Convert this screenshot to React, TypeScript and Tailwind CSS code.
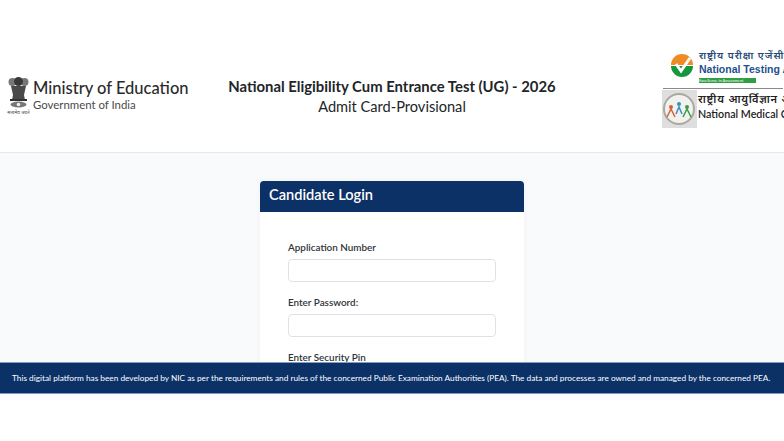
export default function App() {
  const font = { fontFamily: 'Lato,"Noto Sans",sans-serif' };
  return (
    <div className="relative h-[441px] w-[784px] overflow-hidden bg-white" style={font}>
      <header className="flex h-[153px] items-start border-b border-[#e6e9ec] bg-white">
        <div className="mt-[77px] ml-[7px] flex w-[215px] shrink-0 items-start gap-[3px]">
          <svg width="23" height="39" viewBox="0 0 23 39" className="shrink-0">
            <circle cx="5.5" cy="5" r="4" fill="#777" />
            <circle cx="17.5" cy="5" r="4" fill="#777" />
            <circle cx="11.5" cy="4.5" r="4.5" fill="#3a3a3a" />
            <path d="M4 9h15l-2 9 1 5H5l1-5z" fill="#4a4a4a" />
            <rect x="3" y="22" width="17" height="2" fill="#333" />
            <ellipse cx="11.5" cy="27.5" rx="8" ry="3" fill="#777" />
            <circle cx="11.5" cy="27.5" r="1.8" fill="#eee" />
            <text x="11.5" y="37" textAnchor="middle" fontSize="4.6" fill="#444" fontFamily="'Noto Sans Devanagari','Noto Sans',serif">सत्यमेव जयते</text>
          </svg>
          <div className="flex flex-col pt-[2px]">
            <span className="text-[16.5px] leading-[19px] font-medium whitespace-nowrap text-[#2b2b2b]">Ministry of Education</span>
            <span className="text-[11.4px] leading-[13px] whitespace-nowrap text-[#4a4a4a]">Government of India</span>
          </div>
        </div>
        <div className="mt-[76px] flex w-[340px] shrink-0 flex-col items-center">
          <h1 className="text-[14.85px] leading-[21px] font-bold whitespace-nowrap text-[#212529]">National Eligibility Cum Entrance Test (UG) - 2026</h1>
          <h2 className="text-[14.6px] leading-[19px] font-normal whitespace-nowrap text-[#212529]">Admit Card-Provisional</h2>
        </div>
        <div className="ml-[100px] flex shrink-0 flex-col">
          <div className="mt-[50px] ml-[8px] flex items-start gap-[5px]">
            <svg width="24" height="26" viewBox="0 0 24 26" className="mt-[4px] shrink-0">
              <path d="M1 11a11 11 0 0 1 22 0z" fill="#f08a24" />
              <path d="M1 12a11 11 0 0 0 22 0z" fill="#16963f" />
              <path d="M6 10l5 7L20 4" fill="none" stroke="#fff" strokeWidth="3" />
            </svg>
            <div className="flex flex-col">
              <span className="text-[10px] leading-[13px] font-semibold tracking-[1px] whitespace-nowrap text-[#2a4a7a]" style={{ fontFamily: '"Noto Sans Devanagari","Noto Sans",serif' }}>राष्ट्रीय परीक्षा एजेंसी</span>
              <span className="text-[10.5px] leading-[13px] font-bold whitespace-nowrap text-[#1f4f8f]" style={{ fontFamily: '"Liberation Sans",sans-serif' }}>National Testing Agency</span>
              <span className="mt-[2px] w-[57px] bg-[#2f9e44] text-[4px] leading-[5px] whitespace-nowrap text-white">Excellence in Assessment</span>
            </div>
          </div>
          <div className="mt-[5px] ml-[1px] h-px w-[120px] bg-[#8a8a8a]" />
          <div className="mt-[1px] flex items-start gap-[1px]">
            <svg width="35" height="38" viewBox="0 0 35 38" className="shrink-0">
              <rect width="35" height="38" fill="#dedede" />
              <circle cx="17" cy="19" r="15" fill="#f1f1ee" stroke="#a9a9a0" strokeWidth="2" />
              <circle cx="9" cy="17" r="2" fill="#d9603b" />
              <path d="M5 27l4-8 4 8" fill="none" stroke="#d9603b" strokeWidth="1.5" />
              <circle cx="17" cy="14" r="2" fill="#3a8fc0" />
              <path d="M14 24l3-7 3 7" fill="none" stroke="#3a8fc0" strokeWidth="1.5" />
              <circle cx="25" cy="17" r="2" fill="#3f9a4a" />
              <path d="M21 27l4-8 4 8" fill="none" stroke="#3f9a4a" strokeWidth="1.5" />
            </svg>
            <div className="flex flex-col pt-[3px]">
              <span className="text-[11px] leading-[14px] font-semibold tracking-[0.8px] whitespace-nowrap text-[#222]" style={{ fontFamily: '"Noto Sans Devanagari","Noto Sans",serif' }}>राष्ट्रीय आयुर्विज्ञान आयोग</span>
              <span className="text-[10.7px] leading-[13px] font-semibold whitespace-nowrap text-[#222]">National Medical Commission</span>
            </div>
          </div>
        </div>
      </header>
      <main className="flex h-[210px] justify-center overflow-hidden bg-[#f9fafb] pt-[28px]">
        <section className="h-[300px] w-[264px] rounded-[4px] bg-white shadow-[0_0_6px_rgba(0,0,0,0.04)]">
          <div className="flex h-[31px] items-center rounded-t-[4px] bg-[#0b3167] px-[9px] pb-[3px]">
            <h3 className="text-[14.6px] font-semibold text-white">Candidate Login</h3>
          </div>
          <form className="flex flex-col px-[28px] pt-[29px]">
            <label className="text-[9.9px] leading-[13px] font-semibold text-[#2f3439]">Application Number</label>
            <input className="mt-[5px] h-[23px] w-[208px] rounded-[4px] border border-[#dee2e6] bg-white" />
            <label className="mt-[14px] text-[9.9px] leading-[13px] font-semibold text-[#2f3439]">Enter Password:</label>
            <input className="mt-[5px] h-[23px] w-[208px] rounded-[4px] border border-[#dee2e6] bg-white" />
            <label className="mt-[14px] text-[9.9px] leading-[13px] font-semibold text-[#2f3439]">Enter Security Pin</label>
          </form>
        </section>
      </main>
      <footer className="absolute top-[362px] left-0 flex h-[32px] w-full items-center border-y border-[#7e9cc4] bg-[#0b3167] pl-[12px]">
        <p className="text-[8.27px] whitespace-nowrap text-white">This digital platform has been developed by NIC as per the requirements and rules of the concerned Public Examination Authorities (PEA). The data and processes are owned and managed by the concerned PEA.</p>
      </footer>
    </div>
  );
}
